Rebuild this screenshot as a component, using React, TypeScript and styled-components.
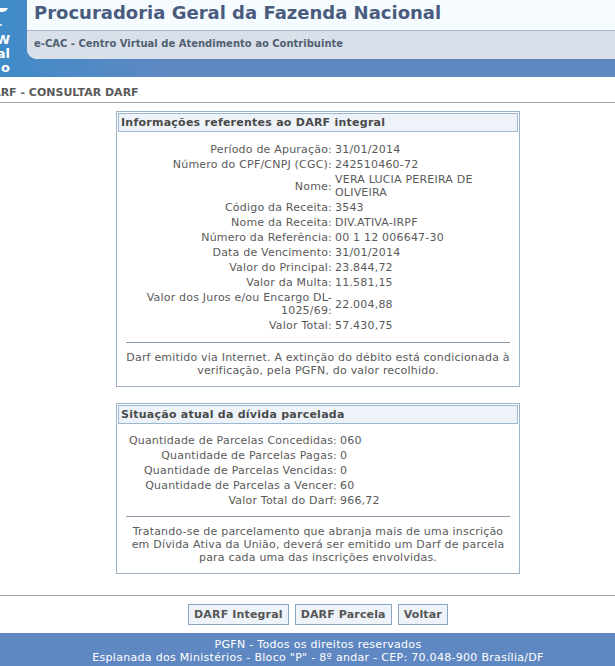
import React from 'react';
import styled, { createGlobalStyle } from 'styled-components';

const GlobalStyle = createGlobalStyle`
	html, body {
		margin: 0;
		padding: 0;
		background: #fff;
		overflow: hidden;
	}
	body {
		font-family: Verdana, "DejaVu Sans", sans-serif;
		font-size: 11px;
		color: #5a5a5a;
	}
`;

const Page = styled.div`
	width: 636px;
	height: 666px;
	display: flex;
	flex-direction: column;
	overflow: hidden;
`;

const Header = styled.div`
	height: 77px;
	display: flex;
	background: linear-gradient(90deg, #3f8bc8 0, #5f88c2 170px);
	flex: none;
`;

const Logo = styled.div`
	width: 27px;
	flex: none;
	overflow: hidden;
	color: #fff;
	font-weight: bold;
	font-size: 13px;
	line-height: 14px;
	display: flex;
	flex-direction: column;
	align-items: flex-end;
	padding-right: 17px;
	box-sizing: border-box;
`;

const LogoMark = styled.svg`
	display: block;
	width: 10px;
	height: 26px;
	margin: 0 0 7px;
	flex: none;
`;

const LogoLine = styled.div`
	white-space: nowrap;
`;

const HeaderMain = styled.div`
	flex: 1;
	height: 59px;
	display: flex;
	flex-direction: column;
	background: #f5fbff;
	border-bottom-left-radius: 10px;
	overflow: hidden;
`;

const Title = styled.div`
	height: 30px;
	padding-left: 7px;
	font-size: 18px;
	line-height: 26px;
	font-weight: bold;
	color: #4a5c7e;
	white-space: nowrap;
`;

const Subtitle = styled.div`
	flex: 1;
	padding-left: 7px;
	background: #dae0e9;
	border-top: 1px solid #a4b4cb;
	font-size: 10px;
	line-height: 26px;
	font-weight: bold;
	color: #4f6072;
`;

const Crumb = styled.div`
	height: 25px;
	flex: none;
	border-bottom: 1px solid #a5a5a5;
	font-size: 11px;
	line-height: 31px;
	font-weight: bold;
	white-space: nowrap;
	text-indent: -17px;
`;

const Content = styled.div`
	flex: 1;
	display: flex;
	flex-direction: column;
	align-items: center;
	padding-top: 8px;
	gap: 16px;
`;

const Panel = styled.div`
	width: 404px;
	box-sizing: border-box;
	border: 1px solid #9fb3c8;
	padding: 1px;
`;

const PanelTitle = styled.div`
	background: #eef3f9;
	border: 1px solid #9db8d2;
	height: 19px;
	box-sizing: border-box;
	line-height: 17px;
	padding-left: 2px;
	font-size: 11px;
	font-weight: bold;
	letter-spacing: 0.25px;
	color: #4a4a4a;
`;

const Table = styled.div<{ $label: number; $top: number }>`
	display: grid;
	grid-template-columns: ${({ $label }) => $label}px 170px;
	align-items: center;
	padding: ${({ $top }) => $top}px 0 0 7px;
	line-height: 13px;
	column-gap: 3px;
	letter-spacing: 0.2px;
`;

const Label = styled.div`
	text-align: right;
	padding: 1px 0;
`;

const Value = styled.div`
	padding: 1px 0;
`;

const Note = styled.div<{ $gap: number }>`
	margin: ${({ $gap }) => $gap}px 8px 0;
	padding: 8px 0;
	border-top: 1px solid #8a9aa8;
	text-align: center;
	line-height: 13px;
	letter-spacing: 0.2px;
`;

const Actions = styled.div`
	height: 38px;
	box-sizing: border-box;
	flex: none;
	border-top: 1px solid #a5a5a5;
	display: flex;
	justify-content: center;
	align-items: center;
	gap: 6px;
`;

const ActionButton = styled.button`
	height: 21px;
	padding: 0 5px;
	background: #eef3f9;
	border: 1px solid #8ca7c6;
	font-family: inherit;
	font-size: 11px;
	font-weight: bold;
	letter-spacing: 0.15px;
	color: #555;
`;

const Footer = styled.div`
	height: 33px;
	flex: none;
	background: #5f88c2;
	color: #fff;
	text-align: center;
	font-size: 11px;
	line-height: 13px;
	letter-spacing: 0.3px;
	padding-top: 5px;
	box-sizing: border-box;
	white-space: nowrap;
`;

const darf: [string, string][] = [
	['Período de Apuração:', '31/01/2014'],
	['Número do CPF/CNPJ (CGC):', '242510460-72'],
	['Nome:', 'VERA LUCIA PEREIRA DE OLIVEIRA'],
	['Código da Receita:', '3543'],
	['Nome da Receita:', 'DIV.ATIVA-IRPF'],
	['Número da Referência:', '00 1 12 006647-30'],
	['Data de Vencimento:', '31/01/2014'],
	['Valor do Principal:', '23.844,72'],
	['Valor da Multa:', '11.581,15'],
	['Valor dos Juros e/ou Encargo DL-1025/69:', '22.004,88'],
	['Valor Total:', '57.430,75'],
];

const parcelas: [string, string][] = [
	['Quantidade de Parcelas Concedidas:', '060'],
	['Quantidade de Parcelas Pagas:', '0'],
	['Quantidade de Parcelas Vencidas:', '0'],
	['Quantidade de Parcelas a Vencer:', '60'],
	['Valor Total do Darf:', '966,72'],
];

const rows = (data: [string, string][]) =>
	data.map(([label, value]) => (
		<React.Fragment key={label}>
			<Label>{label}</Label>
			<Value>{value}</Value>
		</React.Fragment>
	));

const App = (): JSX.Element => (
	<Page>
		<GlobalStyle />
		<Header>
			<Logo>
				<LogoMark viewBox="0 0 10 26">
					<polygon points="0,8 8,8 6,11 2,12 0,12" fill="#fff" />
					<rect x="0" y="24" width="2" height="2" fill="#cfe3f3" />
				</LogoMark>
				<LogoLine>W</LogoLine>
				<LogoLine>al</LogoLine>
				<LogoLine>o</LogoLine>
			</Logo>
			<HeaderMain>
				<Title>Procuradoria Geral da Fazenda Nacional</Title>
				<Subtitle>e-CAC - Centro Virtual de Atendimento ao Contribuinte</Subtitle>
			</HeaderMain>
		</Header>
		<Crumb>DARF - CONSULTAR DARF</Crumb>
		<Content>
			<Panel>
				<PanelTitle>Informações referentes ao DARF integral</PanelTitle>
				<Table $label={207} $top={10}>{rows(darf)}</Table>
				<Note $gap={9}>
					Darf emitido via Internet. A extinção do débito está condicionada à verificação, pela PGFN, do valor recolhido.
				</Note>
			</Panel>
			<Panel>
				<PanelTitle>Situação atual da dívida parcelada</PanelTitle>
				<Table $label={212} $top={9}>{rows(parcelas)}</Table>
				<Note $gap={8}>
					Tratando-se de parcelamento que abranja mais de uma inscrição em Dívida Ativa da União, deverá ser emitido um Darf de parcela para cada uma das inscrições envolvidas.
				</Note>
			</Panel>
		</Content>
		<Actions>
			<ActionButton>DARF Integral</ActionButton>
			<ActionButton>DARF Parcela</ActionButton>
			<ActionButton>Voltar</ActionButton>
		</Actions>
		<Footer>
			PGFN - Todos os direitos reservados
			<br />
			Esplanada dos Ministérios - Bloco "P" - 8º andar - CEP: 70.048-900 Brasília/DF
		</Footer>
	</Page>
);

export default App;
